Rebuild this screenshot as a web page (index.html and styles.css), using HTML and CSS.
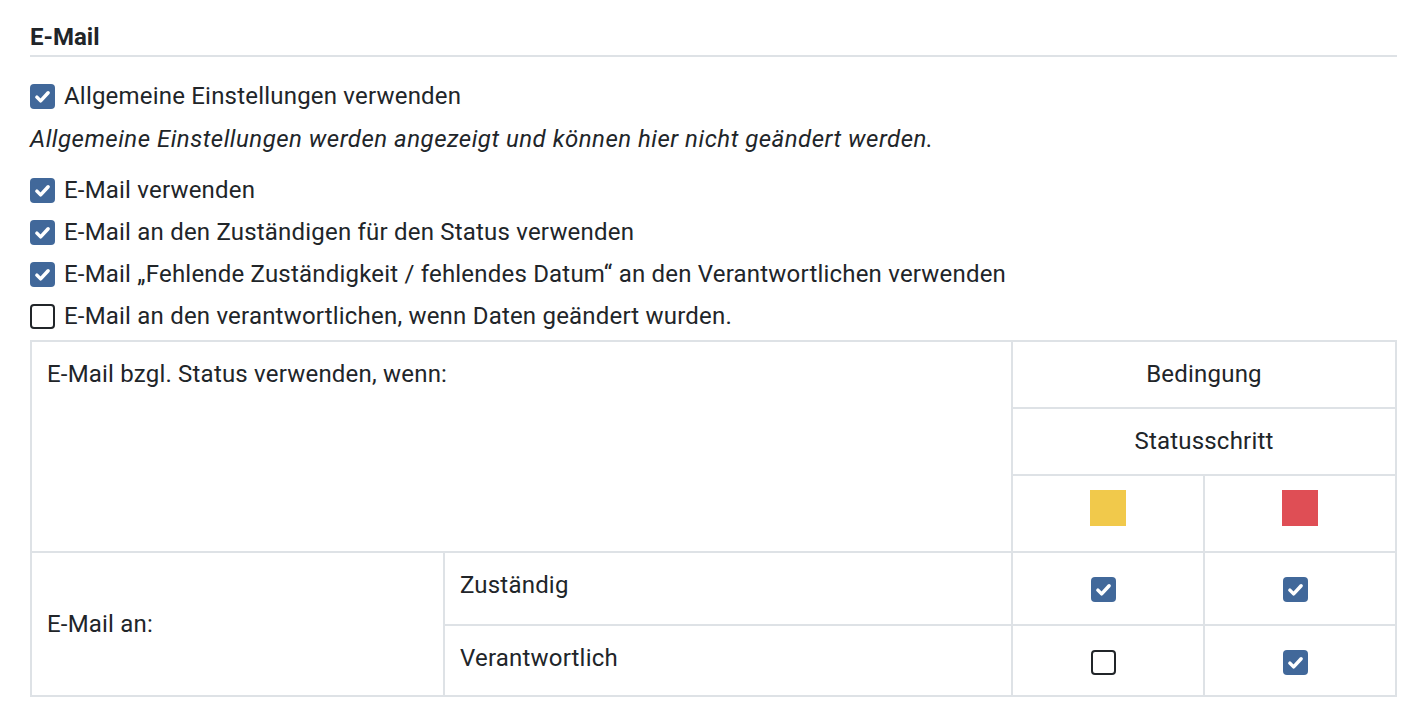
FILE: index.html
```html
<!DOCTYPE html>
<html lang="de">
<head>
<meta charset="utf-8">
<title>E-Mail</title>
<link rel="stylesheet" href="styles.css">
</head>
<body>
<div class="page">
  <h5 class="section-title">E-Mail</h5>

  <label class="check first"><span class="box on"><svg viewBox="0 0 20 20"><path d="M5.5 10.5l3 3l6-6.5"/></svg></span><span>Allgemeine Einstellungen verwenden</span></label>
  <p class="note">Allgemeine Einstellungen werden angezeigt und können hier nicht geändert werden.</p>

  <label class="check"><span class="box on"><svg viewBox="0 0 20 20"><path d="M5.5 10.5l3 3l6-6.5"/></svg></span><span>E-Mail verwenden</span></label>
  <label class="check"><span class="box on"><svg viewBox="0 0 20 20"><path d="M5.5 10.5l3 3l6-6.5"/></svg></span><span>E-Mail an den Zuständigen für den Status verwenden</span></label>
  <label class="check"><span class="box on"><svg viewBox="0 0 20 20"><path d="M5.5 10.5l3 3l6-6.5"/></svg></span><span>E-Mail „Fehlende Zuständigkeit / fehlendes Datum“ an den Verantwortlichen verwenden</span></label>
  <label class="check"><span class="box off"></span><span>E-Mail an den verantwortlichen, wenn Daten geändert wurden.</span></label>

  <table class="grid">
    <colgroup>
      <col class="c1"><col class="c2"><col class="c3"><col class="c4">
    </colgroup>
    <tr class="r1">
      <td colspan="2" rowspan="3" class="top">E-Mail bzgl. Status verwenden, wenn:</td>
      <td colspan="2" class="center">Bedingung</td>
    </tr>
    <tr class="r2">
      <td colspan="2" class="center">Statusschritt</td>
    </tr>
    <tr class="r3">
      <td class="center swatch-cell"><span class="swatch yellow"></span></td>
      <td class="center swatch-cell"><span class="swatch red"></span></td>
    </tr>
    <tr class="r4">
      <td rowspan="2" class="middle">E-Mail an:</td>
      <td class="top">Zuständig</td>
      <td class="center cb-cell"><span class="box on"><svg viewBox="0 0 20 20"><path d="M5.5 10.5l3 3l6-6.5"/></svg></span></td>
      <td class="center cb-cell"><span class="box on"><svg viewBox="0 0 20 20"><path d="M5.5 10.5l3 3l6-6.5"/></svg></span></td>
    </tr>
    <tr class="r5">
      <td class="top">Verantwortlich</td>
      <td class="center cb-cell"><span class="box off"></span></td>
      <td class="center cb-cell"><span class="box on"><svg viewBox="0 0 20 20"><path d="M5.5 10.5l3 3l6-6.5"/></svg></span></td>
    </tr>
  </table>
</div>
</body>
</html>
```
FILE: styles.css
```css
* { box-sizing: border-box; }
html, body { margin: 0; padding: 0; background: #fff; }
body {
  font-family: Roboto, "Liberation Sans", Arial, sans-serif;
  font-size: 24px;
  letter-spacing: 0.2px;
  line-height: 33px;
  color: #212529;
}
.page {
  padding: 23px 25px 0 30px;
}
.section-title {
  margin: 0;
  font-size: 24px;
  font-weight: 700;
  letter-spacing: 0;
  line-height: 28px;
  padding-bottom: 4px;
  border-bottom: 2px solid #dee2e6;
}
.check {
  display: flex;
  align-items: center;
  gap: 9px;
  margin-top: 9px;
}
.check.first { margin-top: 23px; }
.note {
  margin: 10px 0 18px;
  font-style: italic;
  letter-spacing: 0.5px;
}
.note + .check { margin-top: 0; }
.box {
  display: inline-block;
  width: 25px;
  height: 25px;
  border-radius: 4px;
  flex: none;
}
.box.on { background: #41689a; }
.box.on svg { display: block; width: 25px; height: 25px; }
.box.on path { fill: none; stroke: #fff; stroke-width: 2.8; stroke-linecap: round; stroke-linejoin: round; }
.box.off { border: 2px solid #212529; background: #fff; }

.grid {
  margin-top: 7px;
  width: 100%;
  border-collapse: collapse;
  table-layout: fixed;
}
.c1 { width: 413px; }
.c2 { width: 568px; }
.c3 { width: 192px; }
.grid td {
  border: 2px solid #dee2e6;
  padding: 16px 15px;
  vertical-align: top;
}
.grid td.center { text-align: center; }
.grid td.middle { vertical-align: middle; }
.r1 td { height: 67px; }
.r2 td { height: 65px; }
.r3 td { height: 77px; }
.r4 td { height: 73px; }
.r5 td { height: 71px; }
.grid td.swatch-cell { padding-top: 14px; }
.swatch { display: inline-block; width: 36px; height: 36px; vertical-align: top; }
.yellow { background: #f1c94b; }
.red { background: #df4e55; }
.grid td.cb-cell { padding-top: 24px; padding-bottom: 6px; }
.cb-cell .box { vertical-align: top; margin-right: 9px; }
```
